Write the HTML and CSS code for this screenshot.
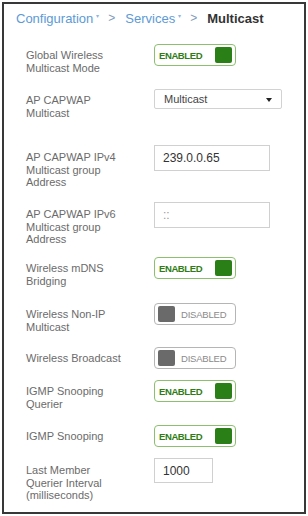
FILE: index.html
```html
<!DOCTYPE html>
<html>
<head>
<meta charset="utf-8">
<link rel="stylesheet" href="styles.css">
</head>
<body>
<div class="frame">
  <div class="crumbs">
    <span class="crumb-link">Configuration</span><span class="caret">&#9662;</span>
    <span class="sep">&gt;</span>
    <span class="crumb-link">Services</span><span class="caret">&#9662;</span>
    <span class="sep">&gt;</span>
    <span class="crumb-current">Multicast</span>
  </div>
  <div class="form">
    <div class="label">Global Wireless<br>Multicast Mode</div>
    <div class="control"><div class="toggle on"><span class="ttext">ENABLED</span><span class="knob"></span></div></div>

    <div class="label lbl-select">AP CAPWAP<br>Multicast</div>
    <div class="control"><div class="select"><span>Multicast</span><span class="arrow"></span></div></div>

    <div class="label lbl-input">AP CAPWAP IPv4<br>Multicast group<br>Address</div>
    <div class="control"><div class="input">239.0.0.65</div></div>

    <div class="label lbl-input">AP CAPWAP IPv6<br>Multicast group<br>Address</div>
    <div class="control"><div class="input muted">::</div></div>

    <div class="label">Wireless mDNS<br>Bridging</div>
    <div class="control"><div class="toggle on"><span class="ttext">ENABLED</span><span class="knob"></span></div></div>

    <div class="label">Wireless Non-IP<br>Multicast</div>
    <div class="control"><div class="toggle off"><span class="knob"></span><span class="ttext">DISABLED</span></div></div>

    <div class="label">Wireless Broadcast</div>
    <div class="control"><div class="toggle off"><span class="knob"></span><span class="ttext">DISABLED</span></div></div>

    <div class="label">IGMP Snooping<br>Querier</div>
    <div class="control"><div class="toggle on"><span class="ttext">ENABLED</span><span class="knob"></span></div></div>

    <div class="label">IGMP Snooping</div>
    <div class="control"><div class="toggle on"><span class="ttext">ENABLED</span><span class="knob"></span></div></div>

    <div class="label lbl-input">Last Member<br>Querier Interval<br>(milliseconds)</div>
    <div class="control"><div class="input short">1000</div></div>
  </div>
</div>
</body>
</html>
```

FILE: styles.css
```css
* { box-sizing: border-box; }
html, body { margin: 0; padding: 0; background: #ffffff; }
body { padding: 2px; font-family: "Liberation Sans", Arial, Helvetica, sans-serif; }

.frame {
  width: 304px;
  height: 512px;
  border: 2px solid #383838;
  padding: 7px 0 0 12px;
  background: #fff;
}

.crumbs {
  font-size: 13px;
  line-height: 15px;
  display: flex;
  align-items: center;
  white-space: nowrap;
}
.crumb-link { color: #5d9ad6; }
.caret { color: #8fb6df; font-size: 6px; margin-left: 3px; position: relative; top: -2px; }
.sep { color: #7f9cba; font-size: 12px; margin: 0 10px 0 9px; }
.crumb-current { color: #333; font-weight: bold; }

.form {
  margin-top: 18px;
  margin-left: 10px;
  display: grid;
  grid-template-columns: 128px auto;
  grid-template-rows: 45px 56px 57px 55px 46px 44px 33px 45px 33px auto;
}

.label {
  font-size: 11px;
  line-height: 12.5px;
  color: #6b6b6b;
  padding-top: 5px;
}
.lbl-select { padding-top: 5px; }
.lbl-input { padding-top: 6px; }

.toggle {
  width: 82px;
  height: 22px;
  border: 1px solid #b5b5b5;
  border-radius: 4px;
  display: flex;
  align-items: center;
  padding: 0 3px;
}
.toggle.on {
  border-color: #8cbf6e;
  justify-content: space-between;
  padding-left: 4px;
}
.toggle .knob {
  width: 17px;
  height: 16px;
  border-radius: 2px;
  background: #6a6a6a;
}
.toggle.on .knob { background: #2a7f17; }
.ttext { font-size: 9.5px; letter-spacing: -0.2px; }
.toggle.on .ttext { color: #2e7d12; font-weight: bold; font-size: 9.5px; letter-spacing: -0.4px; }
.toggle.off .ttext { color: #8a8a8a; margin-left: 6px; }

.select {
  width: 128px;
  height: 20px;
  border: 1px solid #d2d2d2;
  border-radius: 2px;
  display: flex;
  align-items: center;
  justify-content: space-between;
  padding: 0 9px 0 9px;
  font-size: 11px;
  color: #444;
}
.arrow {
  width: 0;
  height: 0;
  border-left: 3px solid transparent;
  border-right: 3px solid transparent;
  border-top: 4px solid #222;
  margin-top: 2px;
}

.input {
  width: 116px;
  height: 26px;
  border: 1px solid #d0d0d0;
  padding: 0 8px;
  display: flex;
  align-items: center;
  font-size: 12px;
  color: #333;
}
.input.muted { color: #999; }
.input.short { width: 59px; height: 25px; }
```
